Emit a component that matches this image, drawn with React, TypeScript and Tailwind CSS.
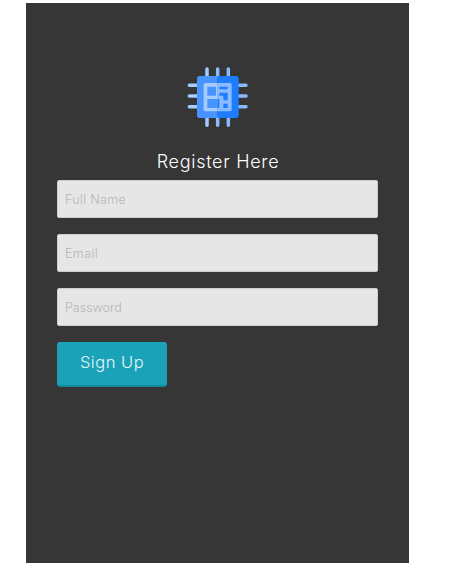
import React from "react";

function ChipLogo() {
  return (
    <svg className="block h-[61px] w-[61px]" viewBox="21 20 183 183" aria-hidden="true">
      <g strokeWidth="10.5" strokeLinecap="round">
        <path d="M81 26V50M28 75H52M28 107H52M28 139H52M81 170V195" stroke="#a4ccff" />
        <path d="M113 26V50M145 26V50M174 75H198M174 107H198M174 139H198M113 170V195M145 170V195" stroke="#8abaff" />
      </g>
      <path d="M113 47H59q-8 0-8 8V165q0 8 8 8H113z" fill="#4793ff" />
      <path d="M113 47H168q8 0 8 8V165q0 8-8 8H113z" fill="#1e7cff" />
      <path d="M113 68H76q-5 0-5 5V148q0 5 5 5H113z" fill="#a4ccff" />
      <path d="M113 68H150q5 0 5 5V148q0 5-5 5H113z" fill="#8abaff" />
      <path d="M82 79H108V106H82zM82 116H113V143H82z" fill="#4793ff" />
      <path d="M118 79H143V87H118zM118 97H143V120H130V106H118zM113 116H118V143H113zM130 130H143V143H130z" fill="#1e7cff" />
    </svg>
  );
}

interface FieldProps {
  label: string;
  type: string;
  spacing: string;
}

function Field({ label, type, spacing }: FieldProps) {
  return (
    <input
      type={type}
      placeholder={label}
      aria-label={label}
      className={`block h-[38px] w-full rounded-[2px] border border-[#cbcdd2] bg-[#e6e6e6] px-[7px] pt-px text-[12.5px] font-light text-gray-700 outline-none placeholder:text-[#b7b5b9] ${spacing}`}
    />
  );
}

export default function App() {
  return (
    <div className="h-[582px] w-[462px] bg-white pl-[26px] pt-[3px] font-['Inter','Liberation_Sans',sans-serif]">
      <main className="h-[560px] w-[383px] bg-[#363636] pl-[31px] pr-[31px] pt-16">
        <div className="flex justify-center">
          <ChipLogo />
        </div>
        <h1 className="mt-[21px] h-[31px] whitespace-nowrap pl-px text-center text-[18px] font-light leading-[26px] tracking-[0.7px] text-white">
          Register Here
        </h1>
        <form className="flex flex-col items-start gap-4" onSubmit={(e) => e.preventDefault()}>
          <Field label="Full Name" type="text" spacing="tracking-[0.32px]" />
          <Field label="Email" type="email" spacing="tracking-[0.4px]" />
          <Field label="Password" type="password" spacing="tracking-normal" />
          <button
            type="submit"
            className="h-[45px] w-[110px] rounded-[3px] border-b-2 border-[#12879b] bg-[#19a2b8] pb-[3px] text-[16.5px] font-light tracking-[0.5px] text-[#e8f6f8]"
          >
            Sign Up
          </button>
        </form>
      </main>
    </div>
  );
}
